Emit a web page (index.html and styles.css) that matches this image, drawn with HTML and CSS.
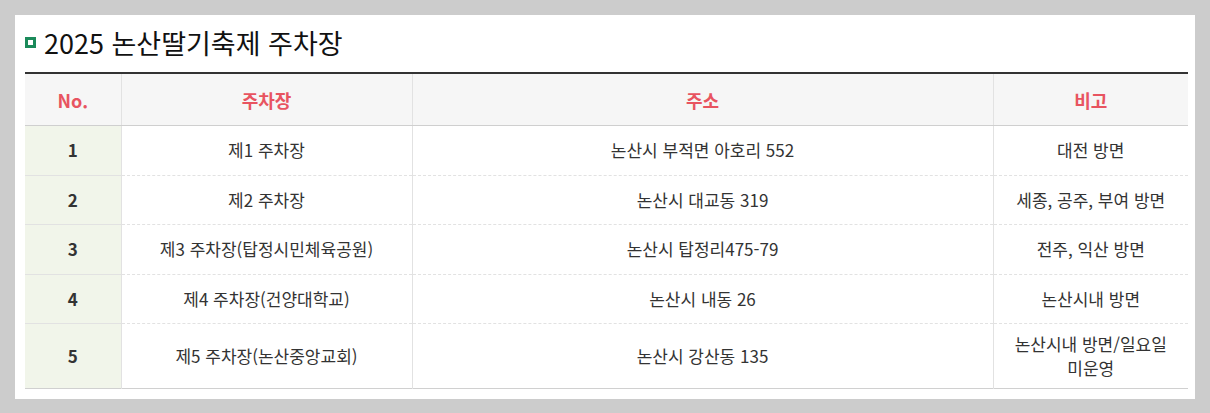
FILE: index.html
```html
<!DOCTYPE html>
<html lang="ko">
<head>
<meta charset="utf-8">
<link rel="stylesheet" href="styles.css">
</head>
<body>
<div class="panel">
  <h2 class="title"><span class="bullet"></span>2025 논산딸기축제 주차장</h2>
  <table class="tbl">
    <colgroup>
      <col class="c-no"><col class="c-name"><col class="c-addr"><col class="c-note">
    </colgroup>
    <thead>
      <tr><th>No.</th><th>주차장</th><th>주소</th><th>비고</th></tr>
    </thead>
    <tbody>
      <tr><td class="no">1</td><td>제1 주차장</td><td>논산시 부적면 아호리 552</td><td>대전 방면</td></tr>
      <tr><td class="no">2</td><td>제2 주차장</td><td>논산시 대교동 319</td><td>세종, 공주, 부여 방면</td></tr>
      <tr><td class="no">3</td><td>제3 주차장(탑정시민체육공원)</td><td>논산시 탑정리475-79</td><td>전주, 익산 방면</td></tr>
      <tr><td class="no">4</td><td>제4 주차장(건양대학교)</td><td>논산시 내동 26</td><td>논산시내 방면</td></tr>
      <tr><td class="no">5</td><td>제5 주차장(논산중앙교회)</td><td>논산시 강산동 135</td><td>논산시내 방면/일요일<br>미운영</td></tr>
    </tbody>
  </table>
</div>
</body>
</html>
```
FILE: styles.css
```css
html, body { margin: 0; padding: 0; }
body {
  background: #cccccc;
  padding: 15px;
  font-family: "Noto Sans CJK KR", "Noto Sans", sans-serif;
  color: #333;
}
.panel {
  background: #fff;
  width: 1180px;
  box-sizing: border-box;
  padding: 0 7px 10px 10px;
}
.title {
  margin: 0;
  height: 54px;
  padding-bottom: 3px;
  display: flex;
  align-items: center;
  font-size: 27px;
  font-weight: 400;
  color: #111;
}
.bullet {
  width: 11px;
  height: 11px;
  box-sizing: border-box;
  background: #1b8a5a;
  margin-right: 8px;
  position: relative;
}
.bullet::after {
  content: "";
  position: absolute;
  left: 3px; top: 3px;
  width: 5px; height: 5px;
  background: #fff;
}
.tbl {
  width: 1163px;
  border-collapse: collapse;
  table-layout: fixed;
  border-top: 2px solid #333;
  border-bottom: 1px solid #d0d0d0;
}
.c-no { width: 96px; }
.c-name { width: 291px; }
.c-addr { width: 581px; }
.c-note { width: 195px; }
.tbl th {
  background: #f6f6f6;
  color: #e85460;
  font-size: 18px;
  font-weight: 700;
  height: 51px;
  padding: 0;
  border-bottom: 1px solid #cfcfcf;
  border-left: 1px solid #e2e2e2;
}
.tbl th:first-child, .tbl td:first-child { border-left: none; }
.tbl td {
  text-align: center;
  font-size: 17px;
  line-height: 24px;
  height: 32.5px;
  padding: 8px 4px;
  border-left: 1px solid #e2e2e2;
  border-top: 1px dashed #e2e2e2;
  color: #333;
}
.tbl tbody tr:first-child td { border-top: none; }
.tbl td.no {
  background: #f1f5ea;
  font-weight: 700;
  border-top: 1px solid #e2e2e2;
}
.tbl tbody tr:first-child td.no { border-top: none; }
```
